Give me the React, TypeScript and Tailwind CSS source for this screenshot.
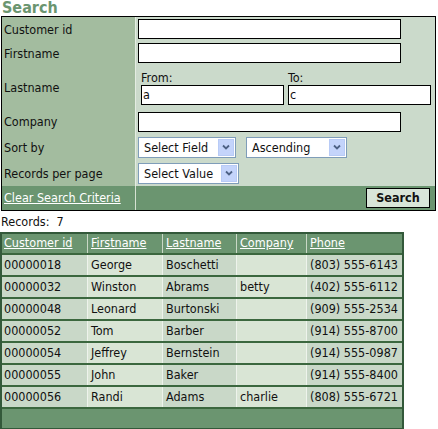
import React from "react";

interface Customer {
  id: string;
  first: string;
  last: string;
  company: string;
  phone: string;
}

const customers: Customer[] = [
  { id: "00000018", first: "George", last: "Boschetti", company: "", phone: "(803) 555-6143" },
  { id: "00000032", first: "Winston", last: "Abrams", company: "betty", phone: "(402) 555-6112" },
  { id: "00000048", first: "Leonard", last: "Burtonski", company: "", phone: "(909) 555-2534" },
  { id: "00000052", first: "Tom", last: "Barber", company: "", phone: "(914) 555-8700" },
  { id: "00000054", first: "Jeffrey", last: "Bernstein", company: "", phone: "(914) 555-0987" },
  { id: "00000055", first: "John", last: "Baker", company: "", phone: "(914) 555-8400" },
  { id: "00000056", first: "Randi", last: "Adams", company: "charlie", phone: "(808) 555-6721" },
];

const headers = ["Customer id", "Firstname", "Lastname", "Company", "Phone"];
const cellBg = ["bg-[#c9d8c8]", "bg-[#d9e5d5]", "bg-[#c9d8c8]", "bg-[#d9e5d5]", "bg-[#c9d8c8]"];

const TextBox = ({ value = "", w }: { value?: string; w: string }) => (
  <div className={`${w} h-[20px] border border-black bg-white pl-[1px] leading-[18px] text-[#111]`}>{value}</div>
);

const Select = ({ label, w }: { label: string; w: string }) => (
  <div className={`${w} h-[21px] border border-[#7f9db9] bg-white flex items-center justify-between pl-[5px] pr-[1px]`}>
    <span className="pt-[2px]">{label}</span>
    <span className="w-[16px] h-[17px] bg-[#c4d4fb] border border-[#b8cbf6] flex items-center justify-center">
      <svg width="8" height="6" viewBox="0 0 8 6">
        <path d="M1 1.5 L4 4.5 L7 1.5" stroke="#4d6185" strokeWidth="1.8" fill="none" />
      </svg>
    </span>
  </div>
);

const FormRow = ({ label, h, children }: { label: string; h: string; children?: React.ReactNode }) => (
  <div className={`flex ${h}`}>
    <div className="w-[134px] bg-[#a3bc9f] border-r border-r-[#e4ece2] pl-[2px] pt-[2px] flex items-center">{label}</div>
    <div className="flex-1 bg-[#cbdacb] pl-[2px] flex items-center">{children}</div>
  </div>
);

export default function App() {
  return (
    <div className="w-[438px] h-[429px] bg-white text-[12.5px] text-[#111] font-['DejaVu_Sans_Condensed','DejaVu_Sans',sans-serif]">
      <h1 className="h-[16px] pl-[2px] text-[16px] leading-[16px] font-bold text-[#6b9570]">Search</h1>

      {/* search criteria */}
      <div className="ml-[1px] w-[435px] border border-black">
        <FormRow label="Customer id" h="h-[24px]">
          <TextBox w="w-[263px]" />
        </FormRow>
        <FormRow label="Firstname" h="h-[24px]">
          <TextBox w="w-[263px]" />
        </FormRow>
        <FormRow label="Lastname" h="h-[44px]">
          <div className="flex gap-[4px] pl-[3px] pt-[1px]">
            <div>
              <div className="leading-[15px]">From:</div>
              <TextBox value="a" w="w-[143px]" />
            </div>
            <div>
              <div className="leading-[15px]">To:</div>
              <TextBox value="c" w="w-[143px]" />
            </div>
          </div>
        </FormRow>
        <FormRow label="Company" h="h-[25px]">
          <TextBox w="w-[263px]" />
        </FormRow>
        <FormRow label="Sort by" h="h-[26px]">
          <div className="flex gap-[10px]">
            <Select label="Select Field" w="w-[98px]" />
            <Select label="Ascending" w="w-[101px]" />
          </div>
        </FormRow>
        <FormRow label="Records per page" h="h-[26px]">
          <Select label="Select Value" w="w-[101px]" />
        </FormRow>
        <div className="flex h-[24px] bg-[#6b9570]">
          <div className="w-[134px] border-r border-r-[#d6e2d3] pl-[2px] pt-[1px] flex items-center">
            <a className="text-white underline">Clear Search Criteria</a>
          </div>
          <div className="flex-1 flex items-center justify-end pr-[5px]">
            <button className="w-[64px] h-[20px] border border-black bg-[#d9e5d9] font-bold leading-[18px]">Search</button>
          </div>
        </div>
      </div>

      <div className="h-[21px] pl-[1px] pt-[2px] flex items-center whitespace-pre">Records:  7</div>

      {/* results */}
      <div className="w-[404px] border-2 border-[#33593a]">
        <div className="grid grid-cols-[86px_75px_74px_70px_95px] h-[21px] bg-[#6b9570] border-b-2 border-b-[#3b673e]">
          {headers.map((h, i) => (
            <div key={h} className={`flex items-center ${i === 0 ? "pl-[2px]" : "pl-[3px]"} ${i < 4 ? "border-r border-r-[#c9d8c6]" : ""}`}>
              <a className="text-white underline">{h}</a>
            </div>
          ))}
        </div>
        {customers.map((c) => {
          const vals = [c.id, c.first, c.last, c.company, c.phone];
          return (
            <div key={c.id} className="grid grid-cols-[86px_75px_74px_70px_95px] h-[22px] border-b-2 border-b-[#3b673e]">
              {vals.map((v, i) => (
                <div key={i} className={`flex items-center ${cellBg[i]} ${i === 0 ? "pl-[2px]" : "pl-[3px]"} ${i < 4 ? "border-r border-r-[#eef3ec]" : ""}`}>
                  {v}
                </div>
              ))}
            </div>
          );
        })}
        <div className="h-[19px] bg-[#6b9570]" />
      </div>
    </div>
  );
}
